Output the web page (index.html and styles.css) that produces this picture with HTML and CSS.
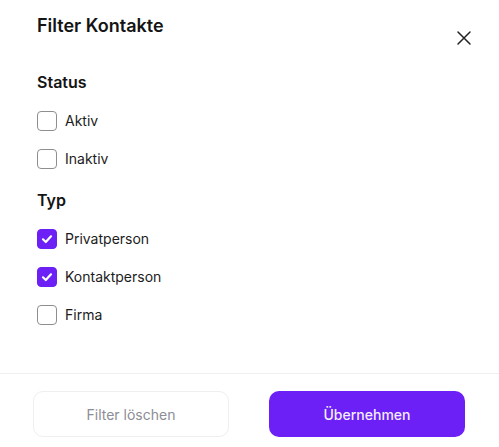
FILE: index.html
```html
<!DOCTYPE html>
<html lang="de">
<head>
<meta charset="utf-8">
<link rel="stylesheet" href="styles.css">
</head>
<body>
<div class="modal">
  <div class="header">
    <h1 class="title">Filter Kontakte</h1>
    <button class="close" aria-label="Schließen">
      <svg width="24" height="24" viewBox="0 0 24 24" fill="none" stroke="#222" stroke-width="1.5" stroke-linecap="round"><path d="M18 6 6 18M6 6l12 12"/></svg>
    </button>
  </div>
  <div class="content">
    <section class="group">
      <h2 class="group-title">Status</h2>
      <label class="option"><span class="box"></span><span>Aktiv</span></label>
      <label class="option"><span class="box"></span><span>Inaktiv</span></label>
    </section>
    <section class="group">
      <h2 class="group-title">Typ</h2>
      <label class="option"><span class="box checked"><svg width="14" height="14" viewBox="0 0 14 14" fill="none" stroke="#fff" stroke-width="2.2" stroke-linecap="round" stroke-linejoin="round"><path d="M3 7.3 5.8 10 11 4.3"/></svg></span><span>Privatperson</span></label>
      <label class="option"><span class="box checked"><svg width="14" height="14" viewBox="0 0 14 14" fill="none" stroke="#fff" stroke-width="2.2" stroke-linecap="round" stroke-linejoin="round"><path d="M3 7.3 5.8 10 11 4.3"/></svg></span><span>Kontaktperson</span></label>
      <label class="option"><span class="box"></span><span>Firma</span></label>
    </section>
  </div>
  <div class="footer">
    <button class="btn btn-secondary">Filter löschen</button>
    <button class="btn btn-primary">Übernehmen</button>
  </div>
</div>
</body>
</html>
```
FILE: styles.css
```css
* { box-sizing: border-box; }
html, body { margin: 0; padding: 0; background: #fff; }
body { font-family: Inter, "Noto Sans", sans-serif; color: #161616; }
.modal { height: 447px; display: flex; flex-direction: column; }
.header { display: flex; justify-content: space-between; align-items: flex-start; padding: 14px 23px 0 37px; }
.title { margin: 0; font-size: 18px; line-height: 24px; font-weight: 600; color: #141414; }
.close { margin-top: 12px; width: 24px; height: 24px; padding: 0; border: 0; background: none; display: flex; }
.content { flex: 1; padding: 20px 37px 0; display: flex; flex-direction: column; gap: 19px; }
.group { display: flex; flex-direction: column; gap: 18px; }
.group-title { margin: 0 0 -1px; font-size: 16px; line-height: 24px; font-weight: 600; color: #141414; }
.option { display: flex; align-items: center; gap: 8px; font-size: 14px; line-height: 20px; color: #1c1c1c; }
.box { width: 20px; height: 20px; border: 1.5px solid #8e8e8e; border-radius: 4px; display: flex; align-items: center; justify-content: center; flex: none; }
.box.checked { background: #6c20f5; border-color: #6c20f5; }
.footer { border-top: 1px solid #efefef; padding: 17px 0 10px 33px; display: grid; grid-template-columns: 196px 196px; gap: 40px; }
.btn { height: 46px; border-radius: 10px; font-family: Inter, sans-serif; font-size: 14px; font-weight: 500; cursor: pointer; }
.btn-secondary { background: #fff; border: 1px solid #efeff2; color: #8d8d96; font-weight: 400; }
.btn-primary { background: #6c20f5; border: 0; color: #f4ecff; }
```
